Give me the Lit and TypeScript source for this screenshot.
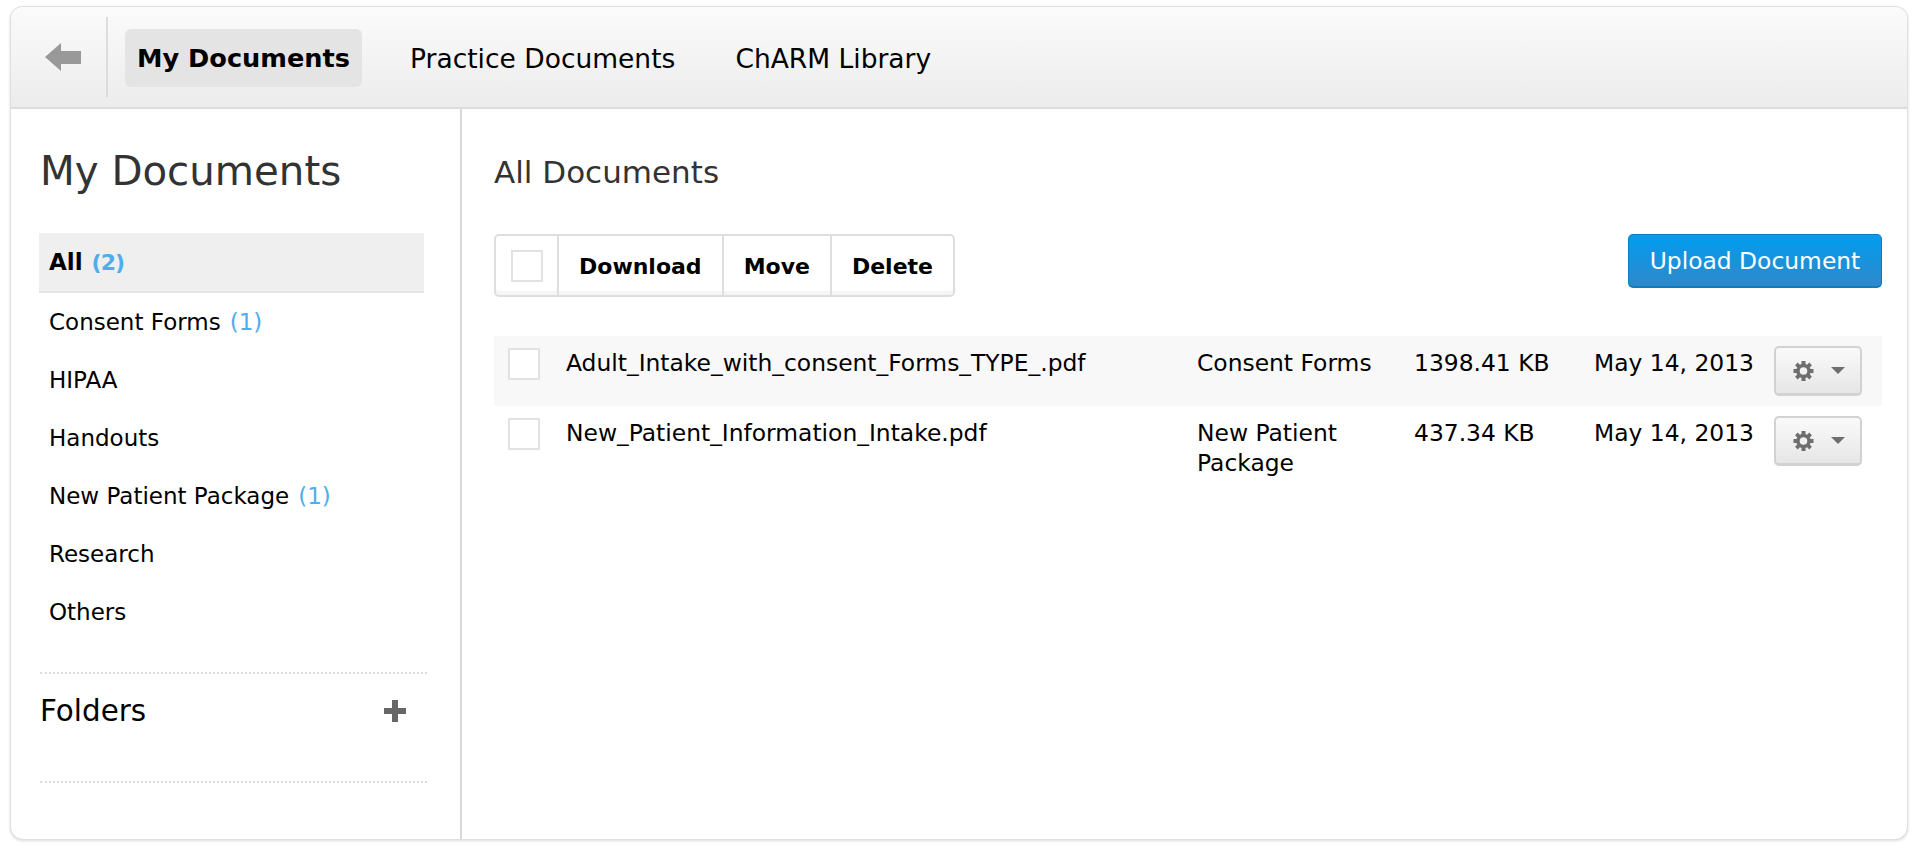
import { css, html, LitElement, nothing } from "lit";
import { customElement } from "lit/decorators.js";

const categories = [
	{ label: "All", count: 2, active: true },
	{ label: "Consent Forms", count: 1 },
	{ label: "HIPAA" },
	{ label: "Handouts" },
	{ label: "New Patient Package", count: 1 },
	{ label: "Research" },
	{ label: "Others" },
];

const documents = [
	{ name: "Adult_Intake_with_consent_Forms_TYPE_.pdf", category: "Consent Forms", size: "1398.41 KB", date: "May 14, 2013" },
	{ name: "New_Patient_Information_Intake.pdf", category: "New Patient Package", size: "437.34 KB", date: "May 14, 2013" },
];

const gear = html`<svg class="gear" viewBox="0 0 20 20" width="21" height="20" aria-hidden="true">
	<path fill="#6e6e6e" fill-rule="evenodd" d="M8 0h4v3l1.6.7 2.2-2.1 2.6 2.6-2.1 2.2.7 1.6h3v4h-3l-.7 1.6 2.1 2.2-2.6 2.6-2.2-2.1-1.6.7v3H8v-3l-1.6-.7-2.2 2.1-2.6-2.6 2.1-2.2L3 12H0V8h3l.7-1.6-2.1-2.2 2.6-2.6 2.2 2.1L8 3V0zm2 6.2a3.8 3.8 0 1 0 0 7.6 3.8 3.8 0 0 0 0-7.6z"/>
</svg>`;

@customElement("app-root")
export class AppRoot extends LitElement {
	static override styles = css`
		:host {
			display: block;
			height: 849px;
			box-sizing: border-box;
			padding: 7px 13px 10px 11px;
			background: #fff;
			color: #000;
			font-family: "DejaVu Sans", sans-serif;
			font-size: 23px;
		}

		.frame {
			height: 100%;
			box-sizing: border-box;
			display: flex;
			flex-direction: column;
			border-radius: 12px;
			box-shadow: 0 0 0 1px #e0e0e0, 0 1px 3px 1px #dcdcdc;
			overflow: hidden;
		}

		.topbar {
			flex: none;
			height: 102px;
			box-sizing: border-box;
			display: flex;
			align-items: center;
			border-bottom: 2px solid #dcdcdc;
			background: linear-gradient(#fbfbfb, #ececec);
		}

		.back {
			flex: none;
			width: 97px;
			height: 80px;
			box-sizing: border-box;
			display: flex;
			align-items: center;
			padding-left: 34px;
			border-right: 2px solid #dcdcdc;
		}

		.tabs {
			display: flex;
			gap: 36px;
			margin-left: 17px;
			padding-top: 2px;
		}

		.tab {
			height: 58px;
			display: flex;
			align-items: center;
			padding: 0 12px;
			border-radius: 6px;
			font-size: 26.5px;
		}

		.tab.active {
			background: #e4e4e4;
			font-size: 25.6px;
			font-weight: 700;
		}

		.body {
			flex: 1;
			display: flex;
			min-height: 0;
		}

		.sidebar {
			flex: none;
			width: 451px;
			box-sizing: border-box;
			padding: 0 33px 0 29px;
			border-right: 2px solid #d8d8d8;
		}

		h1 {
			margin: 0;
			height: 124px;
			display: flex;
			align-items: center;
			font-size: 40.3px;
			font-weight: 400;
			color: #333;
		}

		.cats {
			margin: 0 0 0 -1px;
			padding: 0;
			list-style: none;
		}

		.cats li {
			height: 58px;
			display: flex;
			align-items: center;
			gap: 9px;
			padding-left: 10px;
		}

		.cats li.active {
			height: 60px;
			background: #efefef;
			border-bottom: 2px solid #e4e4e4;
			box-sizing: border-box;
			margin-right: 3px;
			font-weight: 700;
		}

		.count {
			color: #4eaeea;
			font-weight: 400;
		}

		.active .count {
			font-size: 22px;
			font-weight: 700;
			letter-spacing: -1px;
		}

		.folders {
			margin-top: 31px;
			height: 111px;
			box-sizing: border-box;
			display: flex;
			align-items: center;
			justify-content: space-between;
			padding: 0 21px 34px 0;
			border-top: 2px dotted #dcdcdc;
			border-bottom: 2px dotted #dcdcdc;
			font-size: 29.4px;
		}

		.main {
			flex: 1;
			min-width: 0;
			box-sizing: border-box;
			padding: 0 0 0 32px;
			margin-right: 25px;
		}

		h2 {
			margin: 0;
			height: 125px;
			display: flex;
			align-items: center;
			font-size: 31px;
			font-weight: 400;
			color: #333;
		}

		.actions {
			display: flex;
			justify-content: space-between;
			align-items: flex-start;
		}

		.group {
			height: 63px;
			box-sizing: border-box;
			display: flex;
			border: 2px solid #dedede;
			border-radius: 5px;
			box-shadow: inset 0 -4px 0 #f5f5f5;
			font-size: 22px;
		}

		.group > * {
			display: flex;
			align-items: center;
			justify-content: center;
			padding: 2px 20px 0;
			border-left: 2px solid #dedede;
			font-weight: 700;
		}

		.group > :first-child {
			width: 61px;
			box-sizing: border-box;
			padding: 0;
			border-left: 0;
		}

		.check {
			display: block;
			flex: none;
			width: 32px;
			height: 32px;
			box-sizing: border-box;
			border: 2px solid #e2e2e2;
			background: #fff;
		}

		.upload {
			width: 254px;
			height: 54px;
			box-sizing: border-box;
			display: flex;
			align-items: center;
			justify-content: center;
			border: 1px solid #0f7cbe;
			border-bottom-width: 2px;
			border-radius: 5px;
			background: linear-gradient(#019df0, #2f88ca);
			color: #fff;
			font-size: 23.4px;
		}

		.rows {
			margin-top: 39px;
		}

		.row {
			display: grid;
			grid-template-columns: 58px 631px 217px 180px 180px 88px;
			min-height: 70px;
			box-sizing: border-box;
			padding: 10px 20px 0 14px;
			font-size: 23.4px;
		}

		.row:nth-child(odd) {
			background: #f8f8f8;
		}

		.row > div {
			padding-top: 2px;
			line-height: 30px;
		}

		.row > .menu {
			padding-top: 0;
		}

		.menu {
			width: 88px;
			height: 50px;
			box-sizing: border-box;
			display: flex;
			align-items: center;
			gap: 17px;
			padding-left: 17px;
			border: 2px solid #d2d2d2;
			border-bottom-width: 3px;
			border-radius: 5px;
			background: linear-gradient(#fafafa, #e6e6e6);
		}

		.caret {
			width: 0;
			height: 0;
			border: 7px solid transparent;
			border-top: 7px solid #6e6e6e;
			border-bottom: 0;
		}
	`;

	override render() {
		return html`
			<div class="frame">
				<header class="topbar">
					<div class="back">
						<svg viewBox="0 0 36 28" width="36" height="28" aria-hidden="true">
							<path fill="#999" d="M0 14 16 0v8h20v13H16v7z" />
						</svg>
					</div>
					<nav class="tabs">
						<div class="tab active">My Documents</div>
						<div class="tab">Practice Documents</div>
						<div class="tab">ChARM Library</div>
					</nav>
				</header>
				<div class="body">
					<aside class="sidebar">
						<h1>My Documents</h1>
						<ul class="cats">
							${categories.map(
								(c) => html`<li class=${c.active ? "active" : ""}>
									<span>${c.label}</span>
									${c.count ? html`<span class="count">(${c.count})</span>` : nothing}
								</li>`,
							)}
						</ul>
						<div class="folders">
							<span>Folders</span>
							<svg viewBox="0 0 22 22" width="22" height="22" aria-hidden="true">
								<path fill="#666" d="M8 0h6v8h8v6h-8v8H8v-8H0V8h8z" />
							</svg>
						</div>
					</aside>
					<main class="main">
						<h2>All Documents</h2>
						<div class="actions">
							<div class="group">
								<div><span class="check"></span></div>
								<div>Download</div>
								<div>Move</div>
								<div>Delete</div>
							</div>
							<div class="upload">Upload Document</div>
						</div>
						<div class="rows">
							${documents.map(
								(d) => html`<div class="row">
									<div><span class="check"></span></div>
									<div>${d.name}</div>
									<div>${d.category}</div>
									<div>${d.size}</div>
									<div>${d.date}</div>
									<div class="menu">${gear}<span class="caret"></span></div>
								</div>`,
							)}
						</div>
					</main>
				</div>
			</div>
		`;
	}
}
